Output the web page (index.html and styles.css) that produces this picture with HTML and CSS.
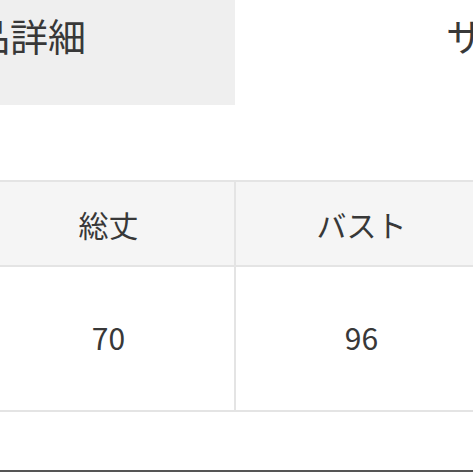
FILE: index.html
```html
<!DOCTYPE html>
<html lang="ja">
<head>
<meta charset="utf-8">
<link rel="stylesheet" href="styles.css">
</head>
<body>
<div class="page">
  <div class="tabs">
    <div class="tab tab-active"><span class="tab-label tab-label-first">商品詳細</span></div>
    <div class="tab"><span class="tab-label tab-label-second">サイズ</span></div>
  </div>
  <div class="size-table">
    <div class="cell head">総丈</div>
    <div class="cell head">バスト</div>
    <div class="cell head">肩幅</div>
    <div class="cell val">70</div>
    <div class="cell val">96</div>
    <div class="cell val">40</div>
  </div>
  <div class="rule"></div>
</div>
</body>
</html>
```
FILE: styles.css
```css
html, body {
  margin: 0;
  padding: 0;
  background: #fff;
}
body {
  width: 473px;
  height: 473px;
  overflow: hidden;
  font-family: "Noto Sans CJK JP", "Noto Sans", sans-serif;
  color: #383838;
}
.page {
  display: flex;
  flex-direction: column;
}
.tabs {
  display: flex;
  height: 105px;
}
.tab {
  flex: 0 0 auto;
  overflow: hidden;
  white-space: nowrap;
  font-size: 38px;
  line-height: 1;
  padding-top: 16px;
  box-sizing: border-box;
}
.tab-active {
  width: 235px;
  background: #efefef;
}
.tab-label-first {
  display: block;
  margin-left: -66px;
}
.tab + .tab {
  width: 300px;
}
.tab-label-second {
  display: block;
  margin-left: 211px;
}
.size-table {
  margin-top: 75px;
  margin-left: -19px;
  width: 760px;
  display: grid;
  grid-template-columns: 251px 251px 251px;
  grid-template-rows: 83px 143px;
  gap: 2px;
  padding: 2px;
  background: #e4e4e4;
}
.cell {
  display: flex;
  align-items: center;
  justify-content: center;
  font-size: 30px;
  line-height: 1;
}
.head {
  background: #f5f5f5;
}
.val {
  background: #fff;
  padding-bottom: 4px;
}
.rule {
  margin-top: 58px;
  height: 2px;
  background: #555;
}
```
